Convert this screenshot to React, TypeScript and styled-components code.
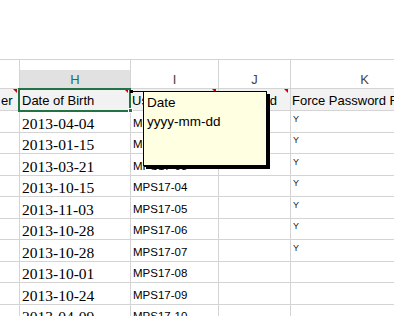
import React from "react";
import styled, { createGlobalStyle, css } from "styled-components";

const GRID = "#d4d4d4";
const GREEN = "#217346";
const COLS = "20px 111px 88px 72px 148px";

const GlobalStyle = createGlobalStyle`
  html, body { margin: 0; padding: 0; background: #fff; overflow: hidden; }
  * { box-sizing: border-box; }
`;

const Sheet = styled.div`
  position: relative;
  width: 394px;
  height: 316px;
  overflow: hidden;
  background: #fff;
  font-family: "Liberation Sans", Arial, sans-serif;
  color: #000;
`;

const TopArea = styled.div`
  height: 60px;
  border-bottom: 1px solid ${GRID};
`;

const Row = styled.div<{ $h: number }>`
  display: grid;
  grid-template-columns: ${COLS};
  width: 439px;
  height: ${(p) => p.$h}px;
`;

const ColHead = styled.div`
  display: flex;
  align-items: flex-end;
  border-right: 1px solid ${GRID};
  border-bottom: 1px solid ${GRID};
`;

const Letter = styled.div<{ $selected?: boolean }>`
  width: 100%;
  height: 18px;
  padding-top: 1px;
  line-height: 17px;
  font-size: 13px;
  text-align: center;
  color: #444;
  ${(p) =>
    p.$selected &&
    css`
      background: #e1e1e1;
      color: ${GREEN};
    `}
`;

const Cell = styled.div<{ $head?: boolean; $comment?: boolean; $selected?: boolean; $tight?: boolean }>`
  position: relative;
  display: flex;
  align-items: flex-end;
  padding-left: ${(p) => (p.$tight ? 1 : 2)}px;
  border-right: 1px solid ${GRID};
  border-bottom: 1px solid ${GRID};
  white-space: nowrap;
  overflow: visible;
  ${(p) =>
    p.$head &&
    css`
      background: #f2f2f2;
      font-size: 13px;
      line-height: 15px;
      padding-bottom: 2px;
    `}
  ${(p) =>
    p.$comment &&
    css`
      &::before {
        content: "";
        position: absolute;
        top: 0;
        right: 2px;
        border-top: 4px solid #d00000;
        border-left: 4px solid transparent;
        z-index: 2;
      }
    `}
  ${(p) =>
    p.$selected &&
    css`
      &::after {
        content: "";
        position: absolute;
        top: -1px;
        left: -2px;
        right: -1px;
        bottom: -2px;
        border: 2px solid ${GREEN};
        z-index: 3;
      }
    `}
`;

const Clip = styled.div`
  overflow: hidden;
  width: 100%;
`;

const Handle = styled.span`
  position: absolute;
  right: -3px;
  bottom: -3px;
  width: 5px;
  height: 5px;
  background: ${GREEN};
  border: 1px solid #fff;
  z-index: 4;
`;

const DateText = styled.span`
  font-family: "Liberation Serif", "Times New Roman", serif;
  font-size: 15.5px;
  line-height: 17px;
`;

const IdText = styled.span`
  font-size: 11.5px;
  line-height: 13px;
  padding-bottom: 2px;
`;

const FlagText = styled.span`
  font-size: 9px;
  line-height: 10px;
  padding-bottom: 8px;
  color: #222;
`;

const CommentBox = styled.div`
  position: absolute;
  left: 143px;
  top: 91px;
  width: 124px;
  height: 75px;
  background: #ffffe1;
  border: 1px solid #000;
  box-shadow: 3px 3px 0 #000;
  padding: 1px 0 0 3px;
  font-size: 13.5px;
  line-height: 19px;
  color: #000;
  z-index: 10;
`;

const CommentLine = styled.div`
  position: absolute;
  left: 131px;
  top: 91px;
  width: 12px;
  height: 1px;
  background: #000;
  z-index: 10;
  &::before {
    content: "";
    position: absolute;
    left: -1px;
    top: -1px;
    width: 3px;
    height: 3px;
    background: #000;
  }
`;

const rows = [
  { date: "2013-04-04", id: "MPS17-01", flag: true },
  { date: "2013-01-15", id: "MPS17-02", flag: true },
  { date: "2013-03-21", id: "MPS17-03", flag: true },
  { date: "2013-10-15", id: "MPS17-04", flag: true },
  { date: "2013-11-03", id: "MPS17-05", flag: true },
  { date: "2013-10-28", id: "MPS17-06", flag: true },
  { date: "2013-10-28", id: "MPS17-07", flag: true },
  { date: "2013-10-01", id: "MPS17-08", flag: false },
  { date: "2013-10-24", id: "MPS17-09", flag: false },
  { date: "2013-04-09", id: "MPS17-10", flag: false },
];

export default function App() {
  return (
    <>
      <GlobalStyle />
      <Sheet>
        <TopArea />
        <Row $h={29}>
          <ColHead />
          <ColHead>
            <Letter $selected>H</Letter>
          </ColHead>
          <ColHead>
            <Letter>I</Letter>
          </ColHead>
          <ColHead>
            <Letter>J</Letter>
          </ColHead>
          <ColHead>
            <Letter>K</Letter>
          </ColHead>
        </Row>
        <Row $h={22}>
          <Cell $head $comment $tight>
            <Clip>er</Clip>
          </Cell>
          <Cell $head $comment $selected>
            <Clip>Date of Birth</Clip>
            <Handle />
          </Cell>
          <Cell $head $comment $tight>
            <Clip>Username</Clip>
          </Cell>
          <Cell $head $comment $tight>
            <Clip>Password</Clip>
          </Cell>
          <Cell $head $tight>
            <Clip>Force Password Reset</Clip>
          </Cell>
        </Row>
        {rows.map((r, i) => (
          <Row key={i} $h={i % 2 === 0 ? 22 : 21}>
            <Cell />
            <Cell>
              <DateText>{r.date}</DateText>
            </Cell>
            <Cell>
              <IdText>{r.id}</IdText>
            </Cell>
            <Cell />
            <Cell>{r.flag && <FlagText>Y</FlagText>}</Cell>
          </Row>
        ))}
        <CommentLine />
        <CommentBox>
          <div>Date</div>
          <div>yyyy-mm-dd</div>
        </CommentBox>
      </Sheet>
    </>
  );
}
